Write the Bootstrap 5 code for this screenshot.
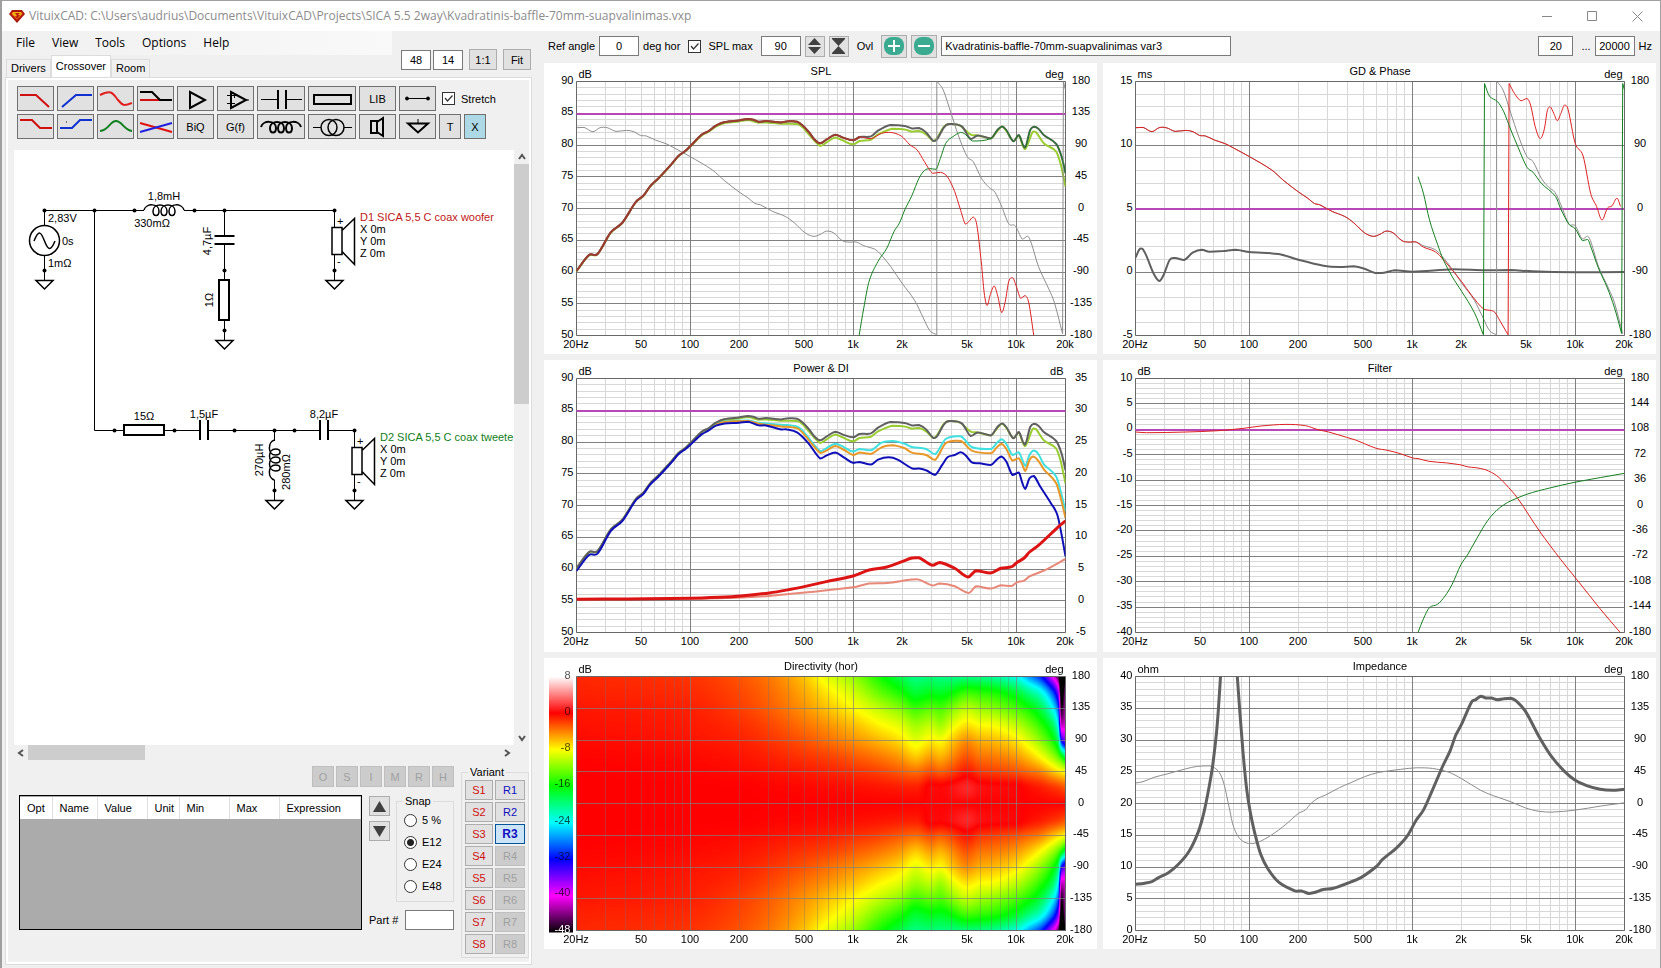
<!DOCTYPE html>
<html lang="en">
<head>
<meta charset="utf-8">
<meta name="viewport" content="width=device-width, initial-scale=1">
<title>VituixCAD</title>
<link href="https://cdn.jsdelivr.net/npm/bootstrap@5.3.0/dist/css/bootstrap.min.css" rel="stylesheet">
<style>
  body { font: 11px/14px "Liberation Sans", Arial, sans-serif; color: #000; background: #f0f0f0; }
  .win { min-height: 100vh; border: 1px solid #a0a0a0; border-left-width: 2px; }
  .titlebar { height: 30px; background: #fff; color: #8c8c8c; font: 12px/30px "Open Sans", "Noto Sans", sans-serif; padding-left: 7px; }
  .titlebar .caption-btn { width: 45px; height: 30px; border: 0; background: none; padding: 0; }
  .editor { flex: 0 0 538px; }
  .menu { height: 24px; width: 390px; background: linear-gradient(90deg, #f0f0f0, #f9f9f9); padding-left: 5px; }
  .menu button { border: 0; background: none; font: 12px/20px "Open Sans", "Noto Sans", sans-serif; padding: 0 8px 0 9px; color: #000; }
  .tabs { height: 22px; padding-left: 4px; }
  .tabs button { border: 1px solid #dcdcdc; border-bottom: 0; background: #f0f0f0; height: 18px; padding: 0 4px 2px; color: #000; }
  .tabs button.active { background: #fff; height: 22px; }
  .flat { border: 1px solid #adadad; background: #e1e1e1; padding: 0; color: #000; display: inline-flex; align-items: center; justify-content: center; border-radius: 0; line-height: 14px; }
  .box { border: 1px solid #7a7a7a; background: #fff; height: 20px; padding: 0 3px; border-radius: 0; color: #000; min-width: 0; }
  .grid-size { width: 30px; } .zoomb { width: 28px; height: 21px; } .partbox { width: 49px; }
  .w40 { width: 40px; } .w35 { width: 35px; } .sq { width: 20px; height: 21px; } .ov { width: 26px; height: 23px; } .ovname { width: 290px; }
  .sizes { padding: 0 10px 7px 0; }
  .tabpage { margin: 0 9px 3px 3px; border: 1px solid #dcdcdc; }
  .tabpage-in { border: 2px solid #fff; }
  .tools { padding: 6px 0 11px 9px; }
  .tools .flat { width: 37px; height: 25px; border-color: #707070; }
  .tools .flat.wide { width: 48px; }
  .tools .flat.slim { width: 22px; }
  .tools .flat.x-on { background: #add8e6; }
  .tools svg { fill: none; stroke: #000; stroke-width: 1; }
  .tools label { gap: 6px; padding-left: 3px; }
  .g3 { gap: 3px; } .g2 { gap: 2px; }
  input[type=checkbox], input[type=radio] { appearance: none; width: 13px; height: 13px; border: 1px solid #333; background: #fff center/11px no-repeat; margin: 0; flex: none; }
  input[type=radio] { border-radius: 50%; }
  input[type=radio]:checked { background-image: radial-gradient(circle, #222 3px, transparent 4px); }
  input[type=checkbox]:checked { background-image: url("data:image/svg+xml,%3Csvg xmlns='http://www.w3.org/2000/svg' viewBox='0 0 11 11'%3E%3Cpath d='M2 5l2.500 3L9.500 2.500' fill='none' stroke='%23333' stroke-width='1.200'/%3E%3C/svg%3E"); }
  .sheet { margin-left: 6px; }
  .paper { background: #fff; overflow: hidden; min-width: 0; }
  .paper svg { display: block; width: 100%; height: 595px; font: 11px "Liberation Sans", Arial, sans-serif; }
  .vbar { width: 15px; }
  .vbar .thumb { height: 240px; background: #cdcdcd; }
  .arrow { height: 14px; display: flex; align-items: center; justify-content: center; }
  .hbar { height: 15px; margin-right: 15px; }
  .hbar .thumb { width: 117px; background: #cdcdcd; }
  .hbar .arrow { width: 14px; height: 15px; }
  .bottom { padding: 6px 0 4px 11px; height: 202px; }
  .modes .flat { width: 22px; height: 21px; background: #ccc; border-color: #bfbfbf; color: #a0a0a0; }
  .parts { height: 135px; border: 1px solid #000; background: #ababab; width: 343px; }
  .parts table { width: 100%; table-layout: fixed; background: #fff; margin: 1px 0 0; }
  .parts th { font-weight: 400; height: 22px; padding: 0 0 0 7px; border-right: 1px solid #e0e0e0; white-space: nowrap; }
  .side { padding-left: 7px; }
  fieldset { border: 1px solid #dcdcdc; }
  legend { float: none; width: auto; font-size: 11px; line-height: 12px; margin: 0 0 0 6px; padding: 0 2px; }
  .arrows { padding-top: 1px; gap: 5px; }
  .arrows .flat { width: 21px; height: 20px; }
  .snap { width: 58px; height: 107px; margin-left: 6px; }
  .snap label { height: 22px; gap: 5px; padding-left: 7px; }
  .snap legend { margin-bottom: 2px; }
  .variant { width: 68px; height: 192px; margin-left: 7px; }
  .variant-grid { display: grid; grid-template-columns: 28px 30px; gap: 2px; padding: 2px 0 0 3px; }
  .variant-grid .flat { height: 20px; }
  .variant-grid .s { color: #d01010; } .variant-grid .r { color: #1010c0; }
  .variant-grid .off { background: #ccc; color: #a0a0a0; border-color: #bfbfbf; }
  .variant-grid .on { background: #cce4f7; border-color: #005499; font-weight: 700; font-size: 12px; }
  .topbar { height: 32px; padding: 5px 4px 7px 7px; }
  .charts { display: grid; grid-template-columns: repeat(2, minmax(0, 1fr)); grid-template-rows: repeat(3, minmax(200px, 1fr)); gap: 6px; padding: 0 4px 19px 3px; }
  .chart { background: #fff; min-width: 0; min-height: 0; }
  .chart svg, .chart canvas { position: absolute; left: 0; top: 0; width: 100%; height: 100%; font: 11px "Liberation Sans", Arial, sans-serif; }
</style>
</head>
<body>
<div class="win d-flex flex-column">
  <header class="titlebar d-flex align-items-center">
    <svg width="16" height="14" class="me-1" viewBox="0 0 16 14"><path d="M3 1h10l3 4-8 9-8-9z" fill="#a8180c"/><path d="M3 3h10l1 2-6 6-6-6z" fill="#d83010"/><path d="M4 3h8l1 2-5 5-5-5z" fill="#f0b010"/><path d="M6 4h5l-2 2h2l-3 4-2-3h2z" fill="#c02010"/></svg>
    <span class="flex-grow-1 text-nowrap overflow-hidden">VituixCAD: C:\Users\audrius\Documents\VituixCAD\Projects\SICA 5.5 2way\Kvadratinis-baffle-70mm-suapvalinimas.vxp</span>
    <button class="caption-btn" aria-label="Minimize"><svg width="11" height="11" stroke="#888"><path d="M0 5.500h10"/></svg></button>
    <button class="caption-btn" aria-label="Maximize"><svg width="11" height="11" stroke="#888" fill="none"><path d="M.5 .5h9v9h-9z"/></svg></button>
    <button class="caption-btn" aria-label="Close"><svg width="11" height="11" stroke="#888"><path d="M.5.5l10 10m0-10l-10 10"/></svg></button>
  </header>
  <div class="d-flex flex-grow-1">
    <section class="editor d-flex flex-column">
      <div class="d-flex">
        <div>
          <nav class="menu d-flex align-items-center"><button>File</button><button>View</button><button>Tools</button><button>Options</button><button>Help</button></nav>
          <div class="tabs d-flex align-items-end"><button>Drivers</button><button class="active">Crossover</button><button>Room</button></div>
        </div>
        <div class="sizes d-flex ms-auto align-items-end g2">
          <input class="box text-center grid-size" value="48" aria-label="Width">
          <input class="box text-center grid-size me-1" value="14" aria-label="Height">
          <button class="flat me-1 zoomb">1:1</button><button class="flat zoomb">Fit</button>
        </div>
      </div>
      <div class="tabpage flex-grow-1 d-flex flex-column"><div class="tabpage-in flex-grow-1 d-flex flex-column">
        <div class="tools d-flex flex-column g3">
          <div class="d-flex g3 align-items-center">
            <button class="flat" aria-label="Low pass"><svg width="35" height="23"><path d="M2 8h16l13 12" stroke="#d01010" stroke-width="2"/></svg></button>
            <button class="flat" aria-label="High pass"><svg width="35" height="23"><path d="M4 20l14-12h16" stroke="#1030d0" stroke-width="2"/></svg></button>
            <button class="flat" aria-label="Shelf wave"><svg width="35" height="23"><path d="M2 8C14 2 15 7 20 13S26 19 34 16" stroke="#e02020" stroke-width="2"/></svg></button>
            <button class="flat" aria-label="Shelf"><svg width="35" height="23"><path d="M2 13h20" stroke="#d01010" stroke-width="2"/><path d="M2 5h12l8 8h12" stroke-width="2"/></svg></button>
            <button class="flat" aria-label="Amplifier"><svg width="35" height="23"><path d="M12 5v16l15-8z" stroke-width="2"/></svg></button>
            <button class="flat" aria-label="Op amp"><svg width="35" height="23"><path d="M13 5v16l15-8z" stroke-width="2"/><path d="M9 8.500h10M16.500 6v5M9 16.500h8M28 13h3"/></svg></button>
            <button class="flat wide" aria-label="Capacitor"><svg width="46" height="23"><path d="M3 12.500h17M28 12.500h16"/><path d="M20 3v19M28 3v19" stroke-width="2"/></svg></button>
            <button class="flat wide" aria-label="Resistor"><svg width="46" height="23"><path d="M5 8h37v9h-37z" stroke-width="2"/></svg></button>
            <button class="flat">LIB</button>
            <button class="flat" aria-label="Wire"><svg width="35" height="23"><path d="M7 11.500h21"/><circle cx="7" cy="11.500" r="1.500" fill="#000"/><circle cx="28" cy="11.500" r="1.500" fill="#000"/></svg></button>
            <label class="d-flex align-items-center"><input type="checkbox" checked>Stretch</label>
          </div>
          <div class="d-flex g3">
            <button class="flat" aria-label="Low shelf"><svg width="35" height="23"><path d="M2 5h12l8 8h12" stroke="#d01010" stroke-width="2"/></svg></button>
            <button class="flat" aria-label="High shelf"><svg width="35" height="23"><path d="M2 13h12l8-8h12" stroke="#1030d0" stroke-width="2"/><path d="M8 7h1"/></svg></button>
            <button class="flat" aria-label="Peak"><svg width="35" height="23"><path d="M2 16C11 15 12 6 18 6S26 15 34 16" stroke="#108020" stroke-width="2"/></svg></button>
            <button class="flat" aria-label="Cross"><svg width="35" height="23"><path d="M2 8l32 9" stroke="#e01010" stroke-width="2"/><path d="M2 17l32-9" stroke="#2020e0" stroke-width="2"/></svg></button>
            <button class="flat">BiQ</button><button class="flat">G(f)</button>
            <button class="flat wide" aria-label="Inductor"><svg width="46" height="23"><path transform="translate(3 12)" stroke-width="2" d="M0 0C2-7 15-7 15 1C15 7 9 7 9 1C9-7 23-7 23 1C23 7 17 7 17 1C17-7 31-7 31 1C31 7 25 7 25 1C25-7 38-7 40 0"/></svg></button>
            <button class="flat wide" aria-label="Transformer"><svg width="46" height="23"><circle cx="20" cy="12.500" r="8" stroke-width="1.500"/><circle cx="27" cy="12.500" r="8" stroke-width="1.500"/><path d="M4 12.500h8M35 12.500h8"/></svg></button>
            <button class="flat" aria-label="Driver"><svg width="35" height="23"><path d="M11 6h6v12h-6zM17 7l6-4v18l-6-4" stroke-width="2"/></svg></button>
            <button class="flat" aria-label="Ground"><svg width="35" height="23"><path d="M8 8.500h20l-10 9z" stroke-width="2"/><path d="M18 4v4"/></svg></button>
            <button class="flat slim">T</button><button class="flat slim x-on">X</button>
          </div>
        </div>
        <div class="sheet flex-grow-1 d-flex flex-column">
          <div class="d-flex flex-grow-1">
            <div class="paper flex-grow-1">
              <svg aria-label="Crossover schematic"><g transform="translate(-14 -150)" fill="none" stroke="#000">
                <defs>
                  <g id="gnd"><path d="M0 0v9.500"/><path d="M-8.500 10h17L0 18.500z" stroke-width="1.500"/><circle r="2" fill="#000" stroke="none"/></g>
                  <path id="coil" stroke-width="1.500" d="M0 0C2-7 15-7 15 1C15 7 9 7 9 1C9-7 23-7 23 1C23 7 17 7 17 1C17-7 31-7 31 1C31 7 25 7 25 1C25-7 38-7 40 0"/>
                  <g id="spk"><path d="M0 0v17M0 44v16"/><path d="M-2.500 17h10v27h-10zM7.500 20L20 8v46L7.500 41" stroke-width="1.500"/><circle r="2" fill="#000" stroke="none"/><use href="#gnd" y="60"/></g>
                </defs>
                <path d="M44.500 225v-14.500H144M184 210.500h150.500M94.500 210.500v220H124M224.500 210.500V236M224.500 244v35M224.500 320v11M164 430.500h36M208 430.500h112M328 430.500h26.500M274.500 430.500v10.500M274.500 480v10M44.500 256v14"/>
                <circle cx="44.500" cy="240.500" r="15" stroke-width="1.500"/><path d="M34 241c5-12 7-9 10.500 0s6 11 10.500 0" stroke-width="1.500"/>
                <path d="M214.500 236h20M214.500 244h20M200 420v20M208 420v20M320 420v20M328 420v20M219 280h10v40h-10zM124 425h40v10h-40z" stroke-width="2"/>
                <use href="#coil" x="144" y="210"/><use href="#coil" transform="translate(274.500 480) rotate(-90)"/>
                <use href="#gnd" x="44.500" y="270.500"/><use href="#gnd" x="224.500" y="330.500"/><use href="#gnd" x="274.500" y="490.500"/>
                <use href="#spk" x="334.500" y="210.500"/><use href="#spk" x="354.500" y="430.500"/>
                <g fill="#000" stroke="none"><circle cx="44.500" cy="210.500" r="2"/><circle cx="94.500" cy="210.500" r="2"/><circle cx="134.500" cy="210.500" r="2"/><circle cx="194.500" cy="210.500" r="2"/><circle cx="224.500" cy="210.500" r="2"/><circle cx="224.500" cy="270.500" r="2"/><circle cx="114.500" cy="430.500" r="2"/><circle cx="174.500" cy="430.500" r="2"/><circle cx="234.500" cy="430.500" r="2"/><circle cx="274.500" cy="430.500" r="2"/><circle cx="294.500" cy="430.500" r="2"/>
                <text x="48" y="222">2,83V</text><text x="62" y="245">0s</text><text x="48" y="267">1mΩ</text>
                <text x="164" y="200" text-anchor="middle">1,8mH</text><text x="152" y="227" text-anchor="middle">330mΩ</text>
                <text transform="translate(211 241) rotate(-90)" text-anchor="middle">4,7µF</text><text transform="translate(213 300) rotate(-90)" text-anchor="middle">1Ω</text>
                <text x="144" y="420" text-anchor="middle">15Ω</text><text x="204" y="418" text-anchor="middle">1,5µF</text><text x="324" y="418" text-anchor="middle">8,2µF</text>
                <text transform="translate(263 460) rotate(-90)" text-anchor="middle">270µH</text><text transform="translate(290 472) rotate(-90)" text-anchor="middle">280mΩ</text>
                <text x="337" y="225">+</text><text x="337" y="265">-</text><text x="357" y="445">+</text><text x="357" y="485">-</text>
                <text x="360" y="221" fill="#c01818">D1 SICA 5,5 C coax woofer</text><text x="360" y="233">X 0m</text><text x="360" y="245">Y 0m</text><text x="360" y="257">Z 0m</text>
                <text x="380" y="441" fill="#108018">D2 SICA 5,5 C coax tweete</text><text x="380" y="453">X 0m</text><text x="380" y="465">Y 0m</text><text x="380" y="477">Z 0m</text></g>
              </g></svg>
            </div>
            <div class="vbar d-flex flex-column"><div class="arrow"><svg width="8" height="8" fill="none" stroke="#555" stroke-width="2"><path d="M1 6l3-4 3 4"/></svg></div><div class="thumb"></div><div class="arrow mt-auto"><svg width="8" height="8" fill="none" stroke="#555" stroke-width="2"><path d="M1 2l3 4 3-4"/></svg></div></div>
          </div>
          <div class="hbar d-flex"><div class="arrow"><svg width="8" height="8" fill="none" stroke="#555" stroke-width="2"><path d="M6 1L2 4l4 3"/></svg></div><div class="thumb"></div><div class="arrow ms-auto"><svg width="8" height="8" fill="none" stroke="#555" stroke-width="2"><path d="M2 1l4 3-4 3"/></svg></div></div>
        </div>
        <div class="bottom d-flex">
          <div>
            <div class="modes d-flex g2 justify-content-end mb-2"><button class="flat" disabled>O</button><button class="flat" disabled>S</button><button class="flat" disabled>I</button><button class="flat" disabled>M</button><button class="flat" disabled>R</button><button class="flat" disabled>H</button></div>
            <div class="d-flex">
              <div class="parts"><table><colgroup><col style="width:32px"><col style="width:45px"><col style="width:50px"><col style="width:32px"><col style="width:50px"><col style="width:50px"><col></colgroup><thead><tr><th>Opt</th><th>Name</th><th>Value</th><th>Unit</th><th>Min</th><th>Max</th><th>Expression</th></tr></thead></table></div>
              <div class="side d-flex flex-column">
                <div class="d-flex">
                  <div class="arrows d-flex flex-column"><button class="flat" aria-label="Up"><svg width="13" height="11"><path d="M0 11L6.500 0 13 11z" fill="#404040"/></svg></button><button class="flat" aria-label="Down"><svg width="13" height="11"><path d="M0 0L6.500 11 13 0z" fill="#404040"/></svg></button></div>
                  <fieldset class="snap"><legend>Snap</legend>
                    <label class="d-flex align-items-center"><input type="radio" name="snap">5 %</label><label class="d-flex align-items-center"><input type="radio" name="snap" checked>E12</label><label class="d-flex align-items-center"><input type="radio" name="snap">E24</label><label class="d-flex align-items-center"><input type="radio" name="snap">E48</label>
                  </fieldset>
                </div>
                <div class="d-flex align-items-center justify-content-between pt-2"><label for="part">Part #</label><input id="part" class="box partbox"></div>
              </div>
            </div>
          </div>
          <fieldset class="variant"><legend>Variant</legend><div class="variant-grid" id="variants"></div></fieldset>
        </div>
      </div></div>
    </section>
    <main class="flex-grow-1 d-flex flex-column overflow-hidden">
      <div class="topbar d-flex align-items-center text-nowrap">
        <label for="ref">Ref angle</label><input id="ref" class="box w40 text-center mx-1" value="0"><span>deg hor</span>
        <label class="d-flex align-items-center ms-2"><input type="checkbox" checked class="me-1">&nbsp;SPL max</label>
        <input class="box w40 text-center ms-2 me-1" value="90" aria-label="SPL max">
        <button class="flat sq me-1" aria-label="Step"><svg width="13" height="16" fill="#404040"><path d="M0 7L6.500 0 13 7zM0 9l6.500 7L13 9z"/></svg></button>
        <button class="flat sq me-2" aria-label="Fit range"><svg width="13" height="16" fill="#404040"><path d="M0 0h13v1L6.500 8 13 15v1H0v-1L6.500 8 0 1z"/></svg></button>
        <span>Ovl</span>
        <button class="flat ov ms-2 me-1" aria-label="Add overlay"><svg width="20" height="18"><rect width="20" height="18" rx="8" fill="#3aaa90"/><path d="M10 3v12M4 9h12" stroke="#fff" stroke-width="2"/></svg></button>
        <button class="flat ov me-1" aria-label="Remove overlay"><svg width="20" height="18"><rect width="20" height="18" rx="8" fill="#3aaa90"/><path d="M4 9h12" stroke="#fff" stroke-width="2"/></svg></button>
        <input class="box ovname" value="Kvadratinis-baffle-70mm-suapvalinimas var3" aria-label="Overlay name">
        <div class="ms-auto d-flex align-items-center"><input class="box text-center w35" value="20" aria-label="From"><span class="px-1 ms-1">...</span><input class="box w40 text-center" value="20000" aria-label="To"><span class="px-1">Hz</span></div>
      </div>
      <div class="charts flex-grow-1">
        <div class="chart position-relative" id="spl"></div><div class="chart position-relative" id="gd"></div>
        <div class="chart position-relative" id="power"></div><div class="chart position-relative" id="filter"></div>
        <div class="chart position-relative" id="dir"></div><div class="chart position-relative" id="imp"></div>
      </div>
    </main>
  </div>
</div>
<script src="https://cdn.jsdelivr.net/npm/bootstrap@5.3.0/dist/js/bootstrap.bundle.min.js"></script>
<script>
const vg = document.getElementById('variants');
for (let i = 1; i <= 8; i++) {
  vg.insertAdjacentHTML('beforeend', `<button class="flat s">S${i}</button><button class="flat r ${i === 3 ? 'on' : i > 3 ? 'off' : ''}" ${i > 3 ? 'disabled' : ''}>R${i}</button>`);
}

/* Traces are point lists in trace units; "/" starts a new smooth piece joined by a straight line. */
const lf = '99,724 134,676 158,673 195,608 228,578 265,517 287,497 305,470 330,444 365,403 385,378 405,362 418,349 450,314 470,303 490,287 515,276 555,271 580,267 595,269 610,275 630,273 673,277 688,274 718,275 735,288 750,305 768,330 783,340 800,329 825,314 845,322 875,331 893,321';
const hf = ' 1262,325 1280,300 1293,289 1305,300 1325,334 1340,315 1357,353 1372,300 1383,290 1395,296 1410,315 1445,342 1460,380 1471,430';
const total = lf + ' 925,319 945,302 980,285 1020,288 1040,295 1060,294 1080,307 1100,333 1110,329 1130,292 1145,282 1180,289 1205,327 1225,316' + hf;
const overlay = '99,725 134,677 158,674 195,609 228,579 265,518 287,498 305,471 330,445 365,404 385,379 405,363 418,350 450,316 470,305 490,290 515,279 555,274 580,270 610,278 630,277 673,281 718,282 735,293 750,312 783,348 800,338 825,322 845,331 875,343 893,333 925,329 945,313 985,296 1020,298 1040,305 1060,303 1080,313 1103,333 1130,290 1145,282 1175,287 1205,314 1225,316 1262,325 1280,303 1293,290 1305,303 1325,334 1340,317 1357,358 1378,307 1388,306 1410,340 1445,365 1458,405 1471,470';
const phLow = '99,293 120,292 145,305 165,293 185,293 210,304 240,301 260,305 278,316 295,318 320,330 350,341 375,355 418,380 480,420 515,453 555,486 580,504 600,521 615,525 650,545 685,560 710,579 740,609 765,620 783,614 800,604 820,609 845,633 865,637 885,637';
const phase = phLow + ' 905,648 935,658 950,671 980,710 1012,760 1048,813 1072,865 1090,903 1110,916 / 1110,154 / 1112,155 1128,180 1150,250 1170,315 1195,380 1212,395 1235,445 1257,473 1273,487 1290,525 1312,582 1330,588 1350,628 1365,619 1375,640 1395,710 1425,780 1440,820 1463,913 / 1465,154 / 1471,180';
const shift = (s, d) => s.replace(/(\d+),(\d+)/g, (m, x, y) => x + ',' + (+y + d));
const range = (a, b, n) => Array.from({length: n + 1}, (_, i) => a + (b - a) * i / n);
const frameA = [99, 154, 1471, 918], frameB = [99, 70, 1471, 834], frameC = [99, 61, 1468, 829];
const gray = '#606060', thin = '#8c8c8c', red = '#dd2020', green = '#158020';
const powerLow = '99,649 134,601 158,597 195,529 228,498 265,437 287,417 305,390 330,364 365,323 385,298 405,282 418,270 450,238 470,226 490,212 515,205 555,203 580,200';

const charts = {
  spl: { title: 'SPL', u: ['dB', 'deg'], L: range(90, 50, 8), R: range(180, -180, 8), minor: 5, ref: 1, f: frameA, t: [
    ['#9acd32', 2, overlay], [gray, 2, total], [thin, 1, phase],
    [green, 1, '892,918 905,835 920,755 945,695 970,655 990,605 1005,580 1020,540 1040,497 1060,445 1075,422 1090,416 1108,418 1120,385 1135,340 1155,320 1177,307 1190,313 1210,333' + hf],
    [red, 1, lf + ' 925,326 955,310 980,307 1010,318 1035,345 1055,360 1075,395 1098,430 1120,427 1140,441 1160,485 1175,535 1190,583 1200,575 1212,562 1222,585 1235,700 1243,790 1251,828 1260,795 1271,769 1281,800 1292,849 1302,815 1312,755 1323,744 1333,770 1345,806 1358,798 1368,820 1382,918'],
    ['#9c3c30', 2, lf]] },
  gd: { title: 'GD & Phase', u: ['ms', 'deg'], L: range(15, -5, 4), R: range(180, -180, 4), minor: 5, ref: 2, f: [99, 154, 1468, 918], t: [
    [gray, 2, '99,684 110,659 118,657 128,675 150,732 166,754 178,735 195,690 210,685 235,691 260,668 285,660 305,666 345,664 380,660 418,667 500,673 555,690 625,708 670,712 710,710 740,717 770,730 795,729 825,722 875,726 990,719 1080,722 1150,721 1210,725 1330,728 1468,727'],
    [thin, 1, phase.replace(/ \/ 1465.*$/, '')],
    [red, 1, phLow + ' 905,652 935,664 950,677 985,720 1012,756 1040,797 1072,837 1095,843 1105,848 1120,875 1142,916 / 1145,160 / 1145,160 1160,190 1178,212 1195,205 1205,225 1218,290 1232,326 1243,300 1252,242 1260,230 1270,250 1280,272 1290,250 1300,225 1310,238 1330,340 1352,378 1373,490 1390,530 1405,571 1420,535 1433,528 1447,505 1457,530'],
    [green, 1, '890,440 905,490 922,570 945,645 960,688 985,740 1012,785 1048,850 1073,916 / 1076,160 / 1076,160 1090,198 1113,215 1130,245 1150,300 1170,352 1195,412 1212,427 1235,460 1275,500 1290,538 1312,583 1330,597 1350,633 1365,629 1375,655 1395,715 1420,775 1440,835 1460,912 / 1463,160 / 1468,180']] },
  power: { title: 'Power & DI', u: ['dB', 'dB'], L: range(90, 50, 8), R: range(35, -5, 8), minor: 5, ref: 1, f: frameB, t: [
    ['#9acd32', 2, shift(overlay, -84)],
    ['#40e0e0', 2, '490,207 515,199 580,196 610,203 673,209 718,215 735,229 783,289 800,280 825,266 850,277 875,290 893,282 925,286 955,263 985,258 1020,266 1040,276 1080,282 1105,298 1135,252 1177,244 1208,276 1262,282 1280,262 1292,253 1305,267 1322,300 1340,292 1350,315 1358,333 1370,300 1382,287 1395,297 1410,328 1445,365 1460,420 1471,470'],
    ['#e89828', 2, '490,208 515,201 580,198 610,206 673,214 718,220 735,235 783,294 800,287 825,273 850,285 875,300 893,293 925,297 955,277 985,271 1020,280 1040,293 1080,300 1105,315 1135,265 1177,258 1208,287 1262,295 1280,275 1292,267 1305,282 1322,317 1340,310 1350,330 1358,348 1370,315 1380,305 1395,318 1410,343 1445,385 1460,440 1471,490'],
    [gray, 2, shift(total, -84)],
    ['#1010b8', 2, powerLow + ' 610,211 630,211 673,223 690,223 718,232 750,265 783,311 800,302 825,293 850,308 875,324 893,321 925,329 945,314 975,307 1000,314 1040,340 1060,341 1080,346 1105,360 1125,330 1140,307 1160,300 1177,292 1190,300 1208,322 1230,325 1262,330 1280,312 1292,305 1305,320 1322,360 1340,353 1350,385 1358,402 1370,370 1382,363 1400,395 1430,445 1448,480 1460,540 1471,605'],
    ['#e88878', 2, '99,734 418,732 500,731 560,729 640,724 740,714 875,698 920,687 970,685 1040,675 1060,675 1098,693 1118,687 1160,695 1200,715 1220,695 1262,702 1290,692 1320,694 1335,683 1355,678 1370,665 1410,648 1471,613'],
    ['#dc1414', 3, '99,734 240,733 418,731 500,728 560,724 640,715 700,704 750,693 800,681 875,664 920,646 970,637 1012,621 1040,610 1060,609 1080,622 1098,632 1118,623 1160,641 1198,667 1220,648 1260,655 1290,641 1320,636 1335,623 1355,610 1370,592 1395,572 1445,522 1471,498']] },
  filter: { title: 'Filter', u: ['dB', 'deg'], L: range(10, -40, 10), R: range(180, -180, 10), minor: 5, ref: 2, f: [99, 70, 1468, 834], t: [
    [red, 1, '99,231 130,233 240,231 330,227 400,220 450,213 520,208 575,212 610,224 640,231 690,247 715,255 740,266 775,281 800,285 840,296 875,309 890,311 920,319 970,324 1010,330 1030,336 1050,338 1080,345 1110,362 1135,388 1170,432 1230,529 1290,615 1340,682 1400,763 1456,834'],
    [green, 1, '890,834 905,793 922,759 945,749 965,725 985,690 1010,630 1030,598 1055,550 1085,497 1110,467 1130,450 1150,438 1195,418 1260,399 1330,382 1400,368 1468,355']] },
  dir: { title: 'Directivity (hor)', u: ['dB', 'deg'], L: range(8, -48, 7), R: range(180, -180, 8), minor: 1, f: [99, 61, 1471, 829], heat: true, t: [] },
  imp: { title: 'Impedance', u: ['ohm', 'deg'], L: range(40, 0, 8), R: range(180, -180, 8), minor: 5, f: frameC, t: [
    [thin, 1, '99,383 120,379 150,366 190,355 240,340 270,333 305,331 330,346 345,380 360,450 372,510 390,550 415,566 440,563 480,540 520,508 555,475 575,464 590,445 610,429 630,420 670,397 700,383 740,364 780,351 840,342 885,337 930,339 975,350 1012,370 1065,405 1100,421 1150,440 1190,458 1230,469 1265,471 1330,465 1400,453 1468,443'],
    [gray, 3, '99,689 125,686 145,681 165,668 190,655 220,628 250,588 275,530 290,475 305,395 315,330 325,240 331,160 337,61'],
    [gray, 3, '384,61 390,150 400,290 410,400 420,470 432,530 450,600 470,643 500,683 545,709 565,710 583,717 600,714 625,705 650,702 690,687 730,669 775,634 790,615 830,579 860,543 885,495 905,465 930,405 960,330 980,285 995,240 1012,205 1040,138 1050,132 1066,121 1080,126 1095,126 1112,131 1130,128 1150,127 1165,135 1190,165 1230,245 1265,305 1300,348 1330,375 1360,390 1400,402 1435,405 1468,402']] }
};

/* Level in dB per trace x, at 0, 22.5 ... 180 degrees off axis. */
const levels = [
  [99, 0, 0, 0, -.1, -.3, -.5, -.7, -1, -1.2], [418, 0, 0, -.1, -.3, -.6, -.8, -1, -1.3, -1.6],
  [555, 0, 0, -.3, -.6, -1, -1.4, -1.9, -2.2, -2.6], [640, 0, -.1, -.5, -1, -1.6, -2.2, -2.9, -3.3, -3.8],
  [737, 0, -.2, -.8, -1.6, -2.6, -3.6, -4.6, -5.3, -6.2], [800, 0, -.3, -1, -2, -3.4, -4.6, -6, -7.2, -8.8],
  [875, 0, -.4, -1.4, -2.8, -4.5, -6, -7.8, -9.4, -11.3], [950, 0, -.6, -2, -3.8, -5.8, -7.8, -10, -12.8, -15.5],
  [1012, 0, -.8, -2.8, -5, -7.2, -9.2, -12, -15.4, -18.4], [1050, 0, -.9, -3.3, -6.3, -8.8, -11, -14, -17.4, -20],
  [1095, .1, .3, -2.3, -5, -7.5, -10, -13, -16.6, -19.6], [1118, .1, .2, -2.8, -5.6, -8, -11, -13.6, -17, -20],
  [1150, .1, .5, -2, -4.4, -6.4, -9, -12, -16, -20], [1195, 0, 1.2, -.6, -2.6, -4.5, -7.2, -10, -14, -19.8],
  [1230, 0, .5, -1.6, -3.6, -5.5, -8, -11, -14.6, -20], [1262, 0, .3, -1.8, -3.8, -5.8, -8.2, -11.5, -15, -20.4],
  [1331, 0, .2, -2.4, -4.8, -7.2, -10, -13.5, -17.2, -23], [1370, 0, -.4, -3.2, -6.3, -9.3, -12.3, -15.6, -20, -27],
  [1400, 0, -.8, -4, -8, -11.5, -14.6, -18, -22.5, -30.5], [1430, 0, -1.4, -5.6, -10.5, -14.6, -18, -22.5, -28, -38],
  [1450, 0, -1.8, -6.8, -13, -19, -24, -29, -35.5, -45], [1460, 0, -2.2, -7.4, -15.5, -32, -42, -47, -50, -54], [1471, 0, -2.6, -8.2, -19, -36, -41, -42, -43, -48]];
const ramp = [[8, 255, 255, 255], [0, 255, 0, 0], [-8, 255, 255, 0], [-16, 0, 255, 0], [-24, 0, 255, 255], [-32, 0, 0, 255], [-40, 255, 0, 255], [-48, 0, 0, 0]];
function colour(v) {
  v = Math.max(-48, Math.min(8, v));
  const i = Math.min(6, Math.floor((8 - v) / 8)), k = (8 - v) / 8 - i;
  return [1, 2, 3].map(c => ramp[i][c] + (ramp[i + 1][c] - ramp[i][c]) * k);
}
/* Monotone cubic interpolation of ys over xs. */
function smoothAt(xs, ys, x) {
  const n = xs.length;
  let i = 0; while (i < n - 2 && xs[i + 1] < x) i++;
  const sl = j => (ys[j + 1] - ys[j]) / (xs[j + 1] - xs[j]);
  const m = j => j <= 0 ? sl(0) : j >= n - 1 ? sl(n - 2) : sl(j - 1) * sl(j) <= 0 ? 0 : 2 * sl(j - 1) * sl(j) / (sl(j - 1) + sl(j));
  const h = xs[i + 1] - xs[i], t = (x - xs[i]) / h, u = 1 - t;
  return ys[i] * (1 + 2 * t) * u * u + h * m(i) * t * u * u + ys[i + 1] * t * t * (3 - 2 * t) - h * m(i + 1) * t * t * u;
}
function paintHeat(cv, x0, y0, w, h) {
  const ctx = cv.getContext('2d'), W = Math.round(w), H = Math.round(h), img = ctx.createImageData(W, H);
  const xs = levels.map(l => l[0]), angles = range(0, 8, 8), byAngle = angles.map(a => levels.map(l => l[a + 1]));
  for (let x = 0; x < W; x++) {
    const tx = 99 + 1372 * x / (W - 1), column = byAngle.map(ys => smoothAt(xs, ys, tx));
    for (let y = 0; y < H; y++) {
      const c = colour(smoothAt(angles, column, Math.abs(1 - 2 * y / (H - 1)) * 8)), o = (y * W + x) * 4;
      img.data[o] = c[0]; img.data[o + 1] = c[1]; img.data[o + 2] = c[2]; img.data[o + 3] = 255;
    }
  }
  ctx.putImageData(img, Math.round(x0), Math.round(y0));
}
function curve(s, px, py) {
  let d = '';
  s.split('/').forEach(part => {
    const p = part.trim().split(/\s+/).map(q => q.split(',').map(Number)).map(q => [px(q[0]), py(q[1])]);
    d += (d ? 'L' : 'M') + p[0].map(n => n.toFixed(1));
    for (let i = 0; i < p.length - 1; i++) {
      const a = p[i - 1] || p[i], b = p[i], c = p[i + 1], e = p[i + 2] || c;
      const flat = q => (c[1] - b[1]) * q < 0 ? 0 : q;
      const s1 = flat((c[1] - a[1]) / ((c[0] - a[0]) || 1)), s2 = flat((e[1] - b[1]) / ((e[0] - b[0]) || 1)), t = (c[0] - b[0]) / 3;
      d += 'C' + [b[0] + t, b[1] + s1 * t, c[0] - t, c[1] - s2 * t, c[0], c[1]].map(n => n.toFixed(1));
    }
  });
  return d;
}
function draw(id) {
  const el = document.getElementById(id), c = charts[id], W = el.clientWidth, H = el.clientHeight;
  const x0 = 32.5, y0 = 18.5, x1 = W - 31.5, y1 = H - 18.5, w = x1 - x0, h = y1 - y0;
  const fx = f => x0 + w * Math.log10(f / 20) / 3, line = Math.round;
  const px = v => x0 + w * (v - c.f[0]) / (c.f[2] - c.f[0]), py = v => y0 + h * (v - c.f[1]) / (c.f[3] - c.f[1]);
  let light = '', dark = '', txt = '';
  const n = (c.L.length - 1) * (c.heat ? 1 : c.minor);
  if (!c.heat) for (let i = 1; i < n; i++) if (i % c.minor) light += `M${x0} ${Math.floor(y0 + h * i / n) + .5}H${x1}`;
  [30, 40, 50, 60, 70, 80, 90, 200, 300, 400, 500, 600, 700, 800, 900, 2e3, 3e3, 4e3, 5e3, 6e3, 7e3, 8e3, 9e3].forEach(f => light += `M${Math.floor(fx(f)) + .5} ${y0}V${y1}`);
  [100, 1e3, 1e4].forEach(f => dark += `M${Math.floor(fx(f)) + .5} ${y0}V${y1}`);
  c.R.forEach((v, i) => dark += `M${x0} ${Math.floor(y0 + h * i / (c.R.length - 1)) + .5}H${x1}`);
  c.L.forEach((v, i) => txt += `<text x="${x0 - (c.heat ? 6 : 3)}" y="${line(y0 + h * i / (c.L.length - 1)) + 2}" text-anchor="end" ${c.heat && v === -48 ? 'fill="#fff"' : c.heat ? 'fill-opacity=".7"' : ''}>${v}</text>`);
  c.R.forEach((v, i) => txt += `<text x="${line(x1) + 15}" y="${line(y0 + h * i / (c.R.length - 1)) + 2}" text-anchor="middle">${v}</text>`);
  [[20, '20Hz'], [50, '50'], [100, '100'], [200, '200'], [500, '500'], [1e3, '1k'], [2e3, '2k'], [5e3, '5k'], [1e4, '10k'], [2e4, '20k']].forEach(q => txt += `<text x="${Math.floor(fx(q[0]))}" y="${line(y1) + 12}" text-anchor="middle">${q[1]}</text>`);
  txt += `<text x="${line((x0 + x1) / 2)}" y="12" text-anchor="middle">${c.title.replace('&', '&amp;')}</text><text x="${x0 + 2}" y="15">${c.u[0]}</text><text x="${x1 - 2}" y="15" text-anchor="end">${c.u[1]}</text>`;
  const refY = c.ref && Math.floor(y0 + h * c.ref / (c.R.length - 1)) + 1;
  el.innerHTML = (c.heat ? `<canvas width="${W}" height="${H}"></canvas>` : '') + `<svg><defs><clipPath id="clip-${id}"><path d="M${x0} ${y0}H${x1}V${y1}H${x0}z"/></clipPath>
    <linearGradient id="ramp-${id}" x2="0" y2="1">${ramp.map((r, i) => `<stop offset="${i / 7}" stop-color="rgb(${r.slice(1)})"/>`).join('')}</linearGradient></defs>
    ${c.heat ? `<path d="M5 ${y0}H29V${y1 + 2}H5z" fill="url(#ramp-${id})"/>` : ''}
    <g fill="none"><path d="${light}" stroke="${c.heat ? '#707070' : '#d8d8d8'}" ${c.heat ? 'stroke-opacity=".35"' : ''}/><path d="${dark}" stroke="#808080" ${c.heat ? 'stroke-opacity=".7"' : ''}/>
    <path d="M${x0} ${y0}H${x1}V${y1}H${x0}z" stroke="#686868"/>
    ${c.ref ? `<path d="M${x0} ${refY}H${x1}" stroke="#b848b8" stroke-width="2"/>` : ''}
    <g clip-path="url(#clip-${id})" stroke-linejoin="round">${c.t.map(t => `<path d="${curve(t[2], px, py)}" stroke="${t[0]}" stroke-width="${t[1]}"/>`).join('')}</g></g>${txt}</svg>`;
  if (c.heat) paintHeat(el.querySelector('canvas'), x0, y0, w, h);
}
function drawAll() { Object.keys(charts).forEach(draw); }
drawAll();
addEventListener('resize', drawAll);
</script>
</body>
</html>
